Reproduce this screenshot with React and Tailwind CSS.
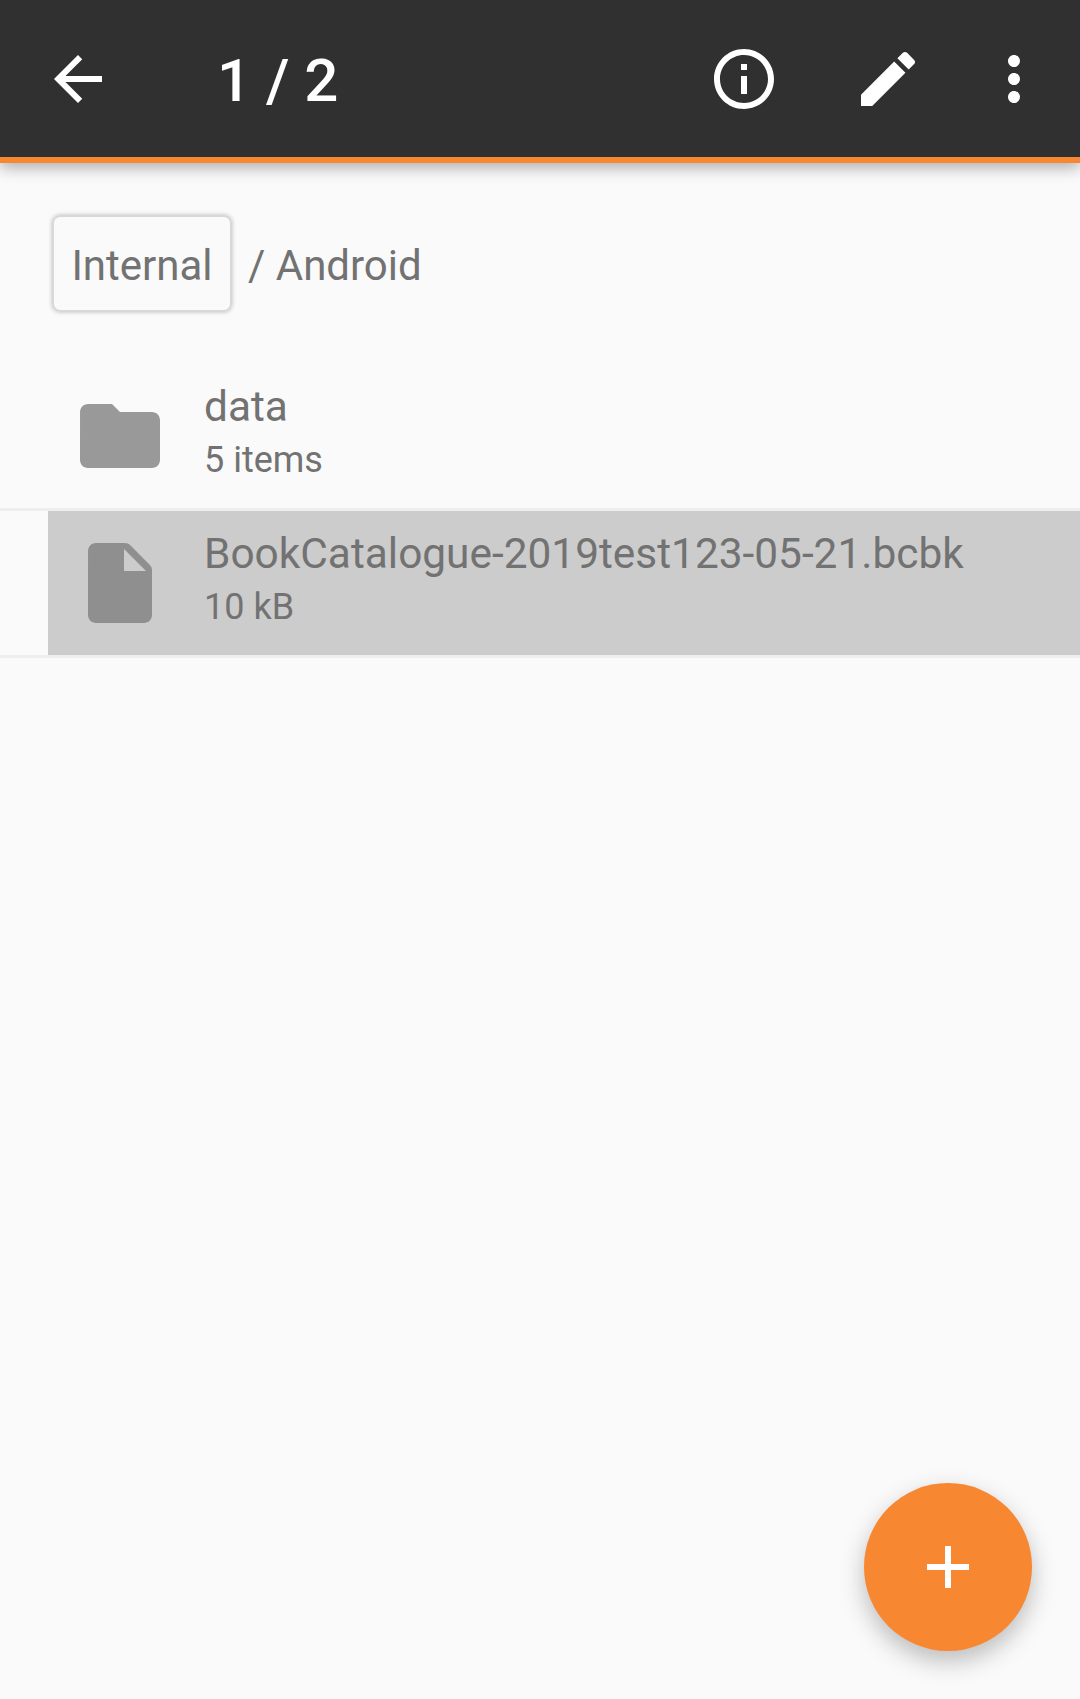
import React from 'react';

const Icon = ({ d, className }) => (
  <svg viewBox="0 0 24 24" className={className} fill="currentColor">
    <path d={d} />
  </svg>
);

const ICONS = {
  back: 'M20 11H7.83l5.59-5.59L12 4l-8 8 8 8 1.41-1.41L7.83 13H20v-2z',
  info: 'M11 7h2v2h-2zm0 4h2v6h-2zm1-9C6.48 2 2 6.48 2 12s4.48 10 10 10 10-4.48 10-10S17.52 2 12 2zm0 18c-4.41 0-8-3.59-8-8s3.59-8 8-8 8 3.59 8 8-3.59 8-8 8z',
  edit: 'M3 17.25V21h3.75L17.81 9.94l-3.75-3.75L3 17.25zM20.71 7.04c.39-.39.39-1.02 0-1.41l-2.34-2.34c-.39-.39-1.02-.39-1.41 0l-1.83 1.83 3.75 3.75 1.83-1.83z',
  more: 'M12 8c1.1 0 2-.9 2-2s-.9-2-2-2-2 .9-2 2 .9 2 2 2zm0 2c-1.1 0-2 .9-2 2s.9 2 2 2 2-.9 2-2-.9-2-2-2zm0 6c-1.1 0-2 .9-2 2s.9 2 2 2 2-.9 2-2-.9-2-2-2z',
  folder: 'M10 4H4c-1.1 0-1.99.9-1.99 2L2 18c0 1.1.9 2 2 2h16c1.1 0 2-.9 2-2V8c0-1.1-.9-2-2-2h-8l-2-2z',
  file: 'M6 2c-1.1 0-1.99.9-1.99 2L4 20c0 1.1.89 2 1.99 2H18c1.1 0 2-.9 2-2V8.83c0-.53-.21-1.04-.59-1.41l-4.83-4.83C14.21 2.21 13.7 2 13.17 2H6zm7 7V3.5L18.5 9H13z',
  plus: 'M19 13h-6v6h-2v-6H5v-2h6V5h2v6h6v2z',
};

const FileRow = ({ icon, iconColor, name, meta, selected }) => (
  <div className="border-b-[3px] border-[#eeeeee]">
    <div className={`h-[144px] flex items-center ml-[48px] ${selected ? 'bg-[#cccccc]' : ''}`}>
      <div className="ml-[24px] w-[132px] shrink-0">
        <Icon d={icon} className={`w-[96px] h-[96px] ${iconColor}`} />
      </div>
      <div className="text-[#727272] whitespace-nowrap pb-[9px]">
        <div className="text-[42.4px] leading-[56px]">{name}</div>
        <div className="text-[36px] leading-[48px] mt-[1px]">{meta}</div>
      </div>
    </div>
  </div>
);

export default function App() {
  return (
    <div className="relative h-[1699px] bg-[#fafafa] overflow-hidden font-['Roboto',sans-serif]">
      {/* Toolbar */}
      <div className="relative h-[163px] bg-[#303030] border-b-[6px] border-[#f88731] shadow-[0_5px_14px_rgba(0,0,0,0.3)] flex items-center pl-[42px] pr-[30px] text-white">
        <Icon d={ICONS.back} className="w-[72px] h-[72px]" />
        <div className="ml-[103px] pt-[4px] text-[60px] font-medium leading-none flex-1">1 / 2</div>
        <Icon d={ICONS.info} className="w-[72px] h-[72px]" />
        <Icon d={ICONS.edit} className="w-[72px] h-[72px] ml-[72px]" />
        <Icon d={ICONS.more} className="w-[72px] h-[72px] ml-[54px]" />
      </div>

      {/* Breadcrumb */}
      <div className="flex items-center pl-[52px] pt-[52px] pb-[52px] text-[42px] text-[#727272]">
        <div className="w-[180px] h-[97px] pt-[4px] flex items-center justify-center rounded-[8px] border-2 border-[#d8d8d8] shadow-[0_0_4px_rgba(0,0,0,0.25)]">
          Internal
        </div>
        <span className="ml-[16px] pt-[4px]">/ Android</span>
      </div>

      {/* File list */}
      <FileRow icon={ICONS.folder} iconColor="text-[#999999]" name="data" meta="5 items" />
      <FileRow
        icon={ICONS.file}
        iconColor="text-[#8f8f8f]"
        name="BookCatalogue-2019test123-05-21.bcbk"
        meta="10 kB"
        selected
      />

      {/* Add button */}
      <div className="absolute left-[864px] top-[1483px] w-[168px] h-[168px] rounded-full bg-[#f88731] shadow-[0_10px_24px_rgba(0,0,0,0.25)] flex items-center justify-center text-white">
        <Icon d={ICONS.plus} className="w-[72px] h-[72px]" />
      </div>
    </div>
  );
}
